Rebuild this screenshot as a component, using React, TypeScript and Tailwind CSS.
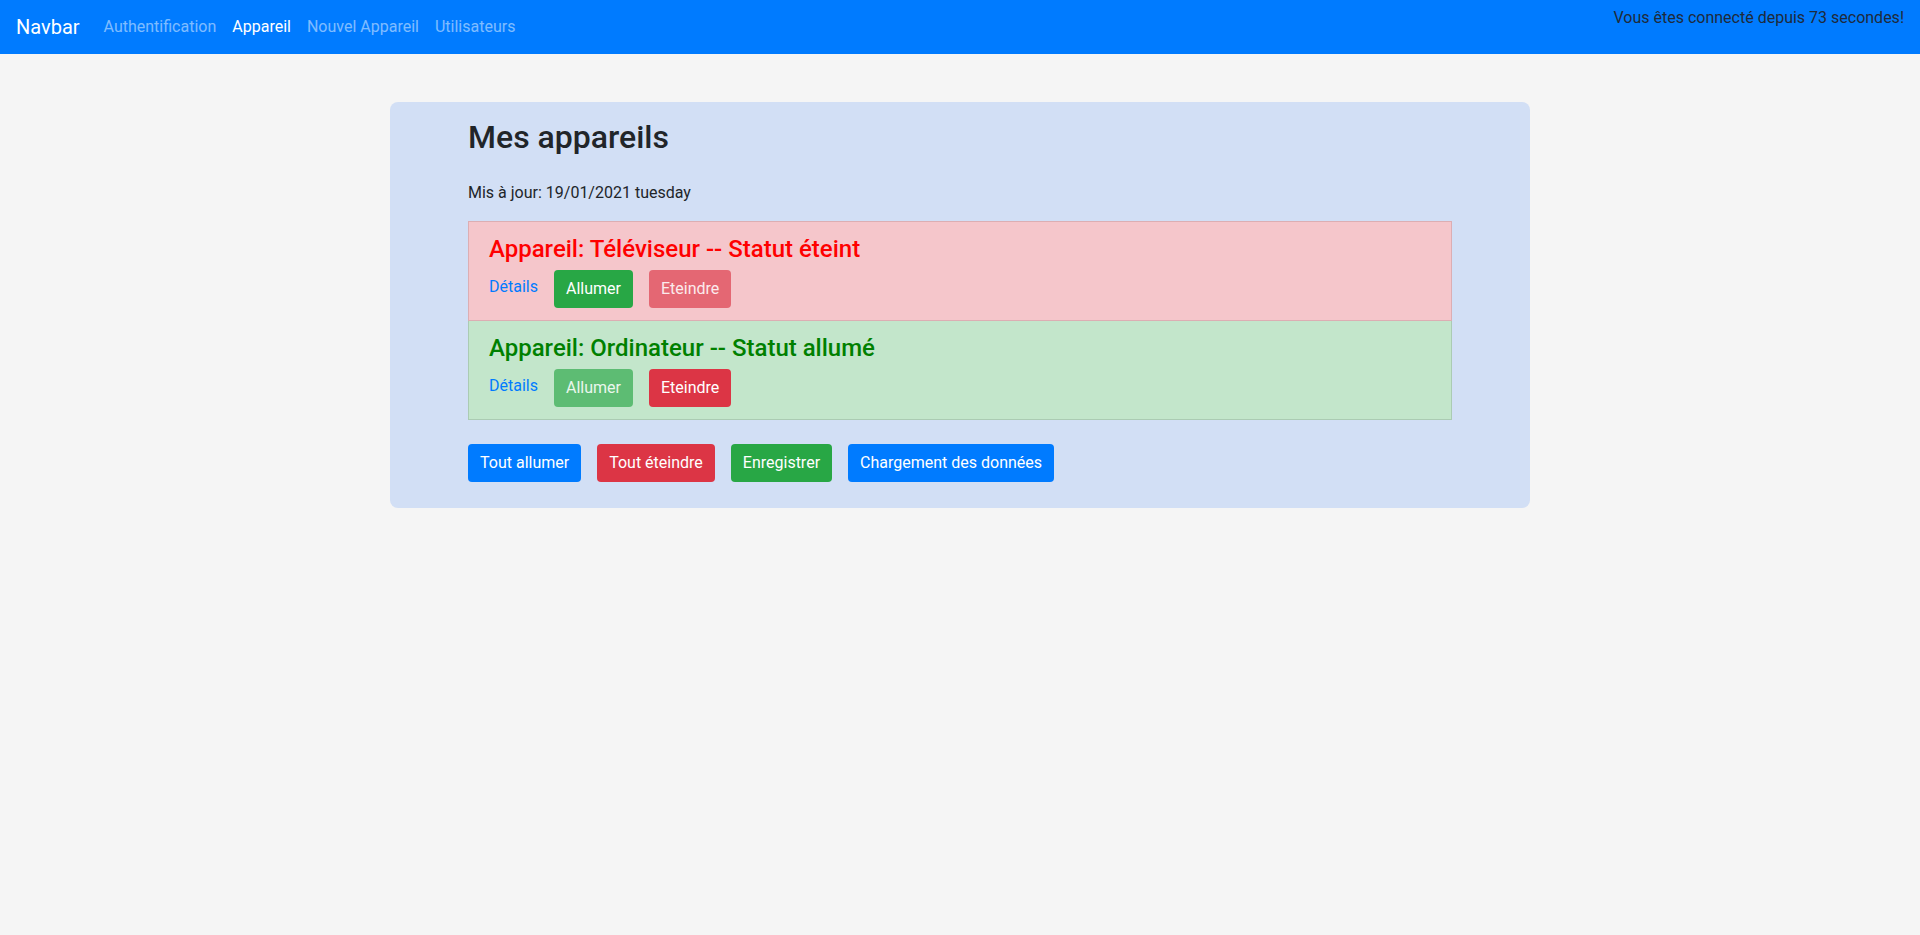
export default function App() {
  const font = { fontFamily: 'Roboto, "Noto Sans", sans-serif' };
  return (
    <div className="min-h-[935px] bg-[#f5f5f5] text-[#212529] text-[16px] leading-[1.5]" style={font}>
      <nav className="h-[54px] bg-[#007bff] flex items-start justify-between px-4">
        <div className="flex items-center h-[54px]">
          <span className="text-white text-[20px] mr-4 leading-[30px]">Navbar</span>
          <div className="flex items-center gap-0">
            <span className="text-white/50 px-2 leading-[40px]">Authentification</span>
            <span className="text-white px-2 leading-[40px]">Appareil</span>
            <span className="text-white/50 px-2 leading-[40px]">Nouvel Appareil</span>
            <span className="text-white/50 px-2 leading-[40px]">Utilisateurs</span>
          </div>
        </div>
        <p className="pt-[6px] leading-[24px] text-[#1f2a3a]">Vous êtes connecté depuis 73 secondes!</p>
      </nav>
      <div className="w-[1140px] mx-auto mt-[48px] bg-[#d2dff5] rounded-lg px-[78px] pt-[16px] pb-[26px]">
        <h2 className="text-[32px] font-medium leading-[1.2] mb-[25px]">Mes appareils</h2>
        <p className="mb-[16px]">Mis à jour: 19/01/2021 tuesday</p>
        <ul>
          <li className="bg-[#f5c6cb] border border-[#dcaeb3] px-[20px] pt-[13px] pb-[12px]">
            <h4 className="text-[24px] font-medium leading-[1.2] text-[#ff0000] mb-[6px]">Appareil: Téléviseur -- Statut éteint</h4>
            <div className="flex items-center gap-4">
              <a className="text-[#007bff] -mt-[4px]">Détails</a>
              <button className="bg-[#28a745] text-white rounded px-3 h-[38px]">Allumer</button>
              <button className="bg-[#dc3545] text-white rounded px-3 h-[38px] opacity-65">Eteindre</button>
            </div>
          </li>
          <li className="bg-[#c3e6cb] border border-t-0 border-[#abcbb3] px-[20px] pt-[13px] pb-[12px]">
            <h4 className="text-[24px] font-medium leading-[1.2] text-[#008000] mb-[6px]">Appareil: Ordinateur -- Statut allumé</h4>
            <div className="flex items-center gap-4">
              <a className="text-[#007bff] -mt-[4px]">Détails</a>
              <button className="bg-[#28a745] text-white rounded px-3 h-[38px] opacity-65">Allumer</button>
              <button className="bg-[#dc3545] text-white rounded px-3 h-[38px]">Eteindre</button>
            </div>
          </li>
        </ul>
        <div className="flex gap-4 mt-[24px]">
          <button className="bg-[#007bff] text-white rounded px-3 h-[38px]">Tout allumer</button>
          <button className="bg-[#dc3545] text-white rounded px-3 h-[38px]">Tout éteindre</button>
          <button className="bg-[#28a745] text-white rounded px-3 h-[38px]">Enregistrer</button>
          <button className="bg-[#007bff] text-white rounded px-3 h-[38px]">Chargement des données</button>
        </div>
      </div>
    </div>
  );
}
